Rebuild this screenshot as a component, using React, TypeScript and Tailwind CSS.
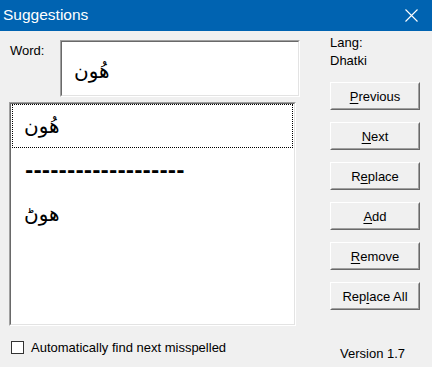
import React from "react";

function Btn({ children }: { children: React.ReactNode }) {
  return (
    <div className="w-[90px] h-[28px] border border-t-white border-l-white border-r-[#696969] border-b-[#696969] bg-[#e1e1e1]">
      <div className="w-full h-full border border-t-[#f0f0f0] border-l-[#f0f0f0] border-r-[#a0a0a0] border-b-[#a0a0a0] bg-[#f0f0f0] flex items-center justify-center text-[13px] leading-[15px]">
        {children}
      </div>
    </div>
  );
}

function U({ c }: { c: string }) {
  return <span className="underline underline-offset-[2px]">{c}</span>;
}

export default function App() {
  return (
    <div className="w-[432px] h-[367px] bg-[#f0f0f0] overflow-hidden font-['Liberation_Sans',Arial,sans-serif] text-[13px] text-black">
      {/* Title bar */}
      <div className="h-[31px] bg-[#0063b1] flex items-center justify-between pl-[3px] pr-[14px]">
        <span className="text-white text-[15.5px] leading-[20px] -mt-[1px]">Suggestions</span>
        <svg width="13" height="13" viewBox="0 0 13 13">
          <path d="M0.5 0.5 L12.5 12.5 M12.5 0.5 L0.5 12.5" stroke="white" strokeWidth="1.1" />
        </svg>
      </div>

      <div className="flex h-[336px]">
        {/* Left column */}
        <div className="w-[320px] flex flex-col">
          <div className="flex mt-[9px]">
            <div className="w-[50px] ml-[10px] pt-[3px] leading-[15px]">Word:</div>
            <div className="w-[240px] h-[57px] border border-t-[#a0a0a0] border-l-[#a0a0a0] border-r-white border-b-white">
              <div className="w-full h-full border border-t-[#696969] border-l-[#696969] border-r-[#e3e3e3] border-b-[#e3e3e3] bg-white flex items-center pl-[12px] pt-[4px]">
                <span dir="rtl" className="font-['DejaVu_Sans',sans-serif] text-[20px] leading-[24px]">هُون</span>
              </div>
            </div>
          </div>

          <div className="ml-[9px] mt-[5px] w-[287px] h-[224px] border border-t-[#a0a0a0] border-l-[#a0a0a0] border-r-white border-b-white">
            <div className="w-full h-full border border-t-[#696969] border-l-[#696969] border-r-[#e3e3e3] border-b-[#e3e3e3] bg-white flex flex-col font-['DejaVu_Sans',sans-serif] text-[20px]">
              <div className="h-[44px] mx-[1px] border border-dotted border-black flex items-center pl-[11px]">
                <span dir="rtl" className="leading-[24px]">هُون</span>
              </div>
              <div className="h-[44px] flex items-center pl-[14px]">
                <span className="leading-[24px] tracking-[0.1px] font-bold">-------------------</span>
              </div>
              <div className="h-[44px] flex items-center pl-[13px]">
                <span dir="rtl" className="leading-[24px]">هوڻ</span>
              </div>
            </div>
          </div>

          <div className="flex items-center ml-[11px] mt-[14px]">
            <div className="w-[13px] h-[13px] border border-[#333333] bg-white" />
            <span className="ml-[7px] leading-[15px]">Automatically find next misspelled</span>
          </div>
        </div>

        {/* Right column */}
        <div className="flex flex-col ml-[10px]">
          <div className="mt-[3px] leading-[18px]">Lang:</div>
          <div className="leading-[18px]">Dhatki</div>
          <div className="mt-[12px] flex flex-col gap-[12px]">
            <Btn><U c="P" />revious</Btn>
            <Btn><U c="N" />ext</Btn>
            <Btn>R<U c="e" />place</Btn>
            <Btn><U c="A" />dd</Btn>
            <Btn><U c="R" />emove</Btn>
            <Btn>Rep<U c="l" />ace All</Btn>
          </div>
          <div className="mt-[36px] ml-[10px] leading-[15px]">Version 1.7</div>
        </div>
      </div>
    </div>
  );
}
